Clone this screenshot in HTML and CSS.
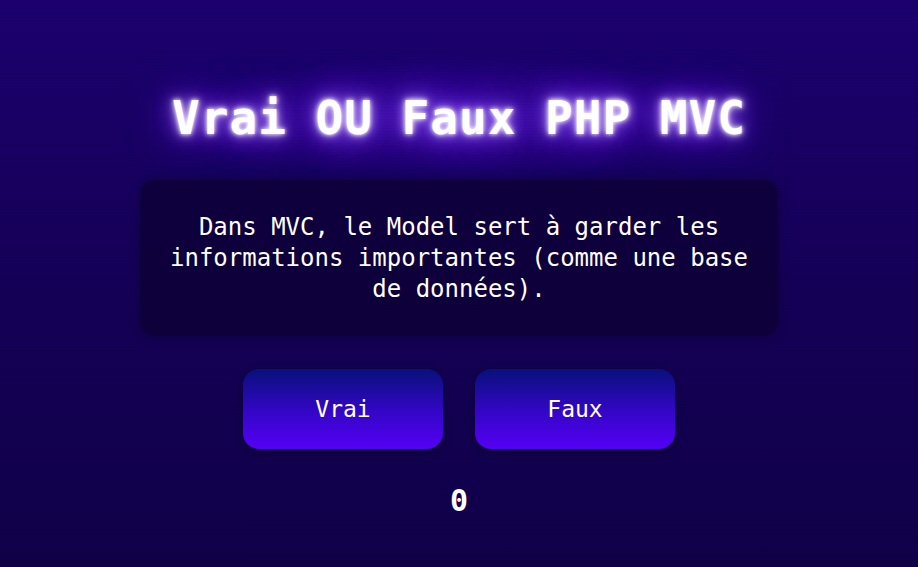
FILE: index.html
```html
<!DOCTYPE html>
<html lang="fr">
<head>
<meta charset="utf-8">
<title>Vrai OU Faux PHP MVC</title>
<link rel="stylesheet" href="styles.css">
</head>
<body>
<main class="game">
  <h1 class="title">Vrai OU Faux PHP MVC</h1>
  <div class="question">Dans MVC, le Model sert à garder les informations importantes (comme une base de données).</div>
  <div class="answers">
    <button class="btn">Vrai</button>
    <button class="btn">Faux</button>
  </div>
  <div class="score">0</div>
</main>
</body>
</html>
```
FILE: styles.css
```css
html, body {
  margin: 0;
  height: 100%;
}
body {
  background:
    repeating-linear-gradient(0deg, rgba(0,0,0,0.06) 0 1px, transparent 1px 3px),
    radial-gradient(ellipse 420px 90px at 459px 118px, rgba(110, 40, 255, 0.35), transparent 70%),
    linear-gradient(180deg, #1c0070 0%, #150058 50%, #10004a 100%);
  font-family: "DejaVu Sans Mono", "Liberation Mono", monospace;
  color: #fff;
  overflow: hidden;
}
.game {
  display: flex;
  flex-direction: column;
  align-items: center;
  padding-top: 90px;
}
.title {
  margin: 0;
  font-size: 46px;
  line-height: 56px;
  font-weight: bold;
  letter-spacing: 1px;
  color: #fff;
  text-shadow: 0 0 4px #fff, 0 0 10px #e0d0ff, 0 0 20px #9a66ff, 0 0 36px #7a2cff, 0 0 50px #6a1cff;
}
.question {
  margin-top: 34px;
  width: 578px;
  padding: 32px 30px 31px;
  background: rgba(12, 0, 50, 0.75);
  border-radius: 14px;
  box-shadow: 0 0 12px rgba(0, 0, 0, 0.25);
  font-size: 24px;
  line-height: 31px;
  text-align: center;
}
.answers {
  margin-top: 33px;
  display: flex;
  gap: 32px;
}
.btn {
  width: 200px;
  height: 80px;
  border: none;
  border-radius: 16px;
  background: linear-gradient(180deg, #08107a 0%, #3506c8 55%, #5500f5 100%);
  color: #fff;
  font-family: "DejaVu Sans Mono", "Liberation Mono", monospace;
  font-size: 23px;
  box-shadow: 0 3px 10px rgba(0, 0, 0, 0.3);
}
.score {
  margin-top: 34px;
  font-size: 30px;
  line-height: 36px;
  font-weight: bold;
}
```
